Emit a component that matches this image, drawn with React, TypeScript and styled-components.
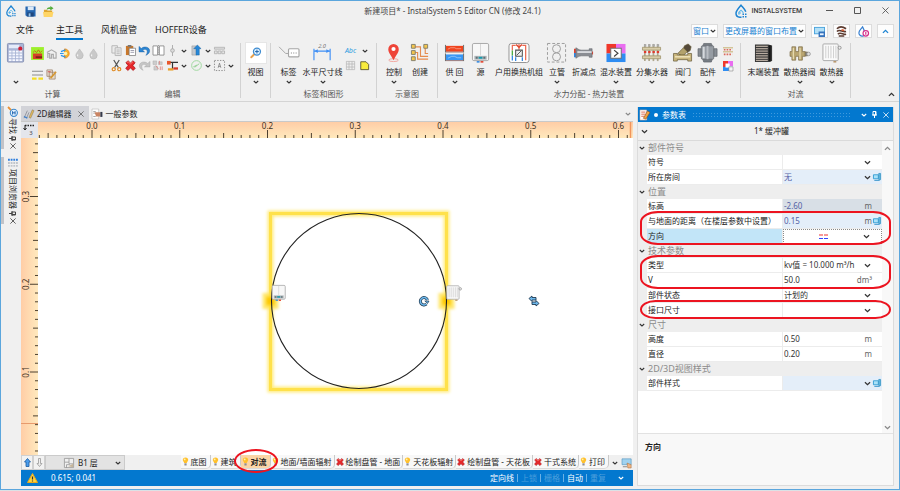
import React, { useEffect, useRef, useState } from "react";
import styled, { createGlobalStyle, css } from "styled-components";

const BLUE = "#0378cf";
const RED = "#ec1420";

const GlobalStyle = createGlobalStyle`
  * { box-sizing: border-box; }
  body {
    margin: 0;
    background: #dbe2e6;
    color: #222;
    font: 8px/12px "Noto Sans", "Noto Sans CJK SC", sans-serif;
  }
  button, input, select { font: inherit; color: inherit; margin: 0; }
`;

/* ---------- window frame ---------- */

const Window = styled.div`
  display: flex;
  flex-direction: column;
  height: calc(100vh - 1px);
  min-height: 440px;
  background: #f0f0f0;
  border: 1px solid #5ba6dd;
`;

const TitleBar = styled.header`
  display: grid;
  grid-template-columns: 1fr auto 1fr;
  align-items: center;
  height: 20px;
  padding-left: 5px;
`;

const QuickAccess = styled.div`
  display: flex;
  align-items: center;
  gap: 7px;
  > :first-child { margin-right: 2px; }
`;

const Title = styled.h1`
  margin: 0;
  font-size: 8px;
  font-weight: 400;
  color: #444;
`;

const TitleRight = styled.div`
  display: flex;
  align-items: center;
  justify-content: flex-end;
`;

const Brand = styled.div`
  display: flex;
  align-items: center;
  gap: 4px;
  margin-right: 13px;
  font: 500 7px/12px Roboto, sans-serif;
  color: #3c3c3c;
`;

const PlainButton = styled.button<{ $w?: number; $h?: number }>`
  display: flex;
  align-items: center;
  justify-content: center;
  width: ${(p) => (p.$w ? p.$w + "px" : "auto")};
  height: ${(p) => (p.$h ? p.$h + "px" : "auto")};
  padding: 0;
  border: 0;
  background: none;
`;

const Glyph = styled.svg`
  display: block;
  flex: none;
  overflow: visible;
`;

/* ---------- menu row ---------- */

const MenuRow = styled.nav`
  display: flex;
  align-items: center;
  height: 20px;
  padding: 0 5px 0 15px;
`;

const MenuTab = styled.button<{ $active?: boolean }>`
  height: 18px;
  margin-right: 18px;
  padding: 0;
  border: 0;
  border-bottom: 2px solid ${(p) => (p.$active ? BLUE : "transparent")};
  background: none;
  font-size: 9px;
  line-height: 16px;
  &:first-child { margin-right: 22px; }
`;

const MenuTools = styled.div`
  display: flex;
  gap: 5px;
  margin-left: auto;
`;

const ToolButton = styled.button`
  display: flex;
  align-items: center;
  justify-content: center;
  gap: 1px;
  min-width: 17px;
  height: 14px;
  padding: 0 1px;
  border: 1px solid #dcdcdc;
  background: #fdfdfd;
  color: #1c83d2;
  white-space: nowrap;
`;

/* ---------- ribbon ---------- */

const Ribbon = styled.section`
  display: flex;
  height: 61px;
  flex: none;
  padding: 2px 0 3px;
  border-bottom: 1px solid #d4d4d4;
`;

const Group = styled.div<{ $w: number }>`
  display: flex;
  flex-direction: column;
  width: ${(p) => p.$w}px;
  border-right: 1px solid #d2d2d2;
`;

const GroupBody = styled.div`
  display: flex;
  justify-content: center;
  flex: 1;
`;

const GroupCaption = styled.div`
  height: 12px;
  margin-bottom: -2px;
  text-align: center;
  color: #555;
`;

const BigButtonBox = styled.button<{ $w: number }>`
  display: flex;
  flex-direction: column;
  align-items: center;
  width: ${(p) => p.$w}px;
  padding: 0;
  border: 0;
  background: none;
  white-space: nowrap;
  > span { line-height: 13px; margin: 2px 0 1px; }
`;

const ViewFrame = styled.i`
  display: block;
  background: #fff;
  outline: 1px solid #e6e6e6;
`;

const IconGrid = styled.div<{ $cols: string; $row: number }>`
  display: grid;
  grid-template-columns: ${(p) => p.$cols};
  grid-auto-rows: ${(p) => p.$row}px;
  align-content: start;
  align-items: center;
  justify-items: center;
`;

const RibbonEnd = styled.div`
  display: flex;
  flex: 1;
  align-items: flex-end;
  justify-content: flex-end;
  padding-right: 4px;
`;

/* ---------- work area ---------- */

const Work = styled.main`
  display: flex;
  flex: 1;
  min-height: 0;
  padding: 4px 5px 3px 0;
`;

const Dock = styled.aside`
  display: flex;
  flex-direction: column;
  gap: 8px;
  width: 20px;
  flex: none;
`;

const DockTab = styled.div`
  display: flex;
  flex-direction: column;
  align-items: center;
  gap: 1px;
  padding: 1px 0 0;
  border-left: 3px solid #c2c3c8;
`;

const DockLabel = styled.span`
  writing-mode: vertical-rl;
  text-orientation: sideways;
  line-height: 12px;
`;

const Editor = styled.div`
  display: flex;
  flex-direction: column;
  flex: 1;
  min-width: 0;
`;

const DocTabs = styled.div`
  display: flex;
  align-items: stretch;
  height: 15px;
  flex: none;
`;

const DocTab = styled.div<{ $active?: boolean }>`
  display: flex;
  align-items: center;
  gap: 3px;
  padding: 0 2px 0 3px;
  background: ${(p) => (p.$active ? "#d2d3d8" : "transparent")};
`;

const DocTabsMore = styled.div`
  display: flex;
  align-items: center;
  margin-left: auto;
`;

const Sheet = styled.div`
  display: grid;
  grid-template: 16px 1fr / 17px 1fr;
  flex: 1;
  min-height: 0;
  border-top: 1px solid #c9c9c9;
`;

const Corner = styled.div`
  display: flex;
  align-items: center;
  justify-content: center;
  background: #e4e6ec;
`;

const RulerTop = styled.svg`
  display: block;
  width: 100%;
  height: 16px;
  overflow: visible;
  background: linear-gradient(#ffcda6, #ffe9bd);
`;

const RulerSide = styled.svg`
  display: block;
  width: 17px;
  height: 100%;
  overflow: visible;
  background: linear-gradient(90deg, #ffcda6, #ffe9bd);
`;

const Canvas = styled.svg`
  display: block;
  width: 100%;
  height: 100%;
  background: #fff;
`;

const LayerBar = styled.div`
  display: flex;
  align-items: stretch;
  height: 15px;
  flex: none;
`;

const LevelButton = styled.button`
  display: flex;
  align-items: center;
  justify-content: center;
  width: 12px;
  padding: 0;
  border: 1px solid #d0d0d0;
  background: #f2f2f2;
`;

const LevelPicker = styled.label`
  display: flex;
  align-items: center;
  gap: 3px;
  width: 80px;
  padding: 0 3px 0 18px;
  border: 1px solid #cbcbcb;
  background: #e3e3e3;
`;

const Layers = styled.div`
  display: flex;
  margin-left: auto;
`;

const LayerTab = styled.button<{ $active?: boolean }>`
  position: relative;
  display: flex;
  align-items: center;
  gap: 2px;
  min-width: 30px;
  height: 14px;
  padding: 0 2px 0 1px;
  border: 0;
  border-right: 1px solid #c9c9c9;
  border-bottom: 1px solid #d9d9d9;
  border-radius: 0 0 5px 0;
  background: ${(p) => (p.$active ? "#fbd5a6" : "#f8f8f8")};
  font-weight: ${(p) => (p.$active ? 700 : 400)};
  white-space: nowrap;
`;

const LayerMark = styled.span`
  position: absolute;
  inset: -6px -8px -5px -7px;
  z-index: 2;
  border: 2px solid ${RED};
  border-radius: 50%;
  pointer-events: none;
`;

const LayerTools = styled.div`
  display: flex;
  align-items: center;
  gap: 4px;
  padding: 0 1px 0 3px;
`;

const StatusBar = styled.footer`
  display: flex;
  align-items: center;
  height: 16px;
  flex: none;
  padding: 0 9px 0 6px;
  background: ${BLUE};
  color: #fff;
`;

const StatusCoords = styled.span`
  margin-left: 13px;
`;

const StatusModes = styled.div`
  display: flex;
  align-items: center;
  margin-left: auto;
  margin-right: 9px;
`;

const Mode = styled.button<{ $on?: boolean }>`
  padding: 0 3px;
  border: 0;
  border-left: 1px solid #6bb1e6;
  background: none;
  line-height: 8px;
  color: ${(p) => (p.$on ? "#fff" : "#4c9fdc")};
  &:first-child { border-left: 0; }
`;

/* ---------- properties panel ---------- */

const Panel = styled.section`
  display: flex;
  flex-direction: column;
  width: 28%;
  min-width: 257px;
  max-width: 340px;
  margin: 1px 0 0 4px;
  border: 1px solid #dcdcdc;
  border-top: 0;
  background: #fff;
`;

const PanelHeader = styled.header`
  display: flex;
  align-items: center;
  gap: 4px;
  height: 15px;
  flex: none;
  padding: 0 4px 0 2px;
  background: ${BLUE};
  color: #fff;
`;

const Dot = styled.span`
  width: 4px;
  height: 4px;
  border-radius: 50%;
  background: #fff;
`;

const Grip = styled.span`
  flex: 1;
  height: 5px;
  margin: 0 4px 0 2px;
  background: radial-gradient(circle, #3f9ade 0 0.5px, transparent 1px) 0 0 / 3px 3px;
`;

const Caption = styled.div`
  display: grid;
  grid-template-columns: 12px 1fr;
  align-items: center;
  height: 19px;
  flex: none;
  border-bottom: 1px solid #dadada;
  background: #f0f0f0;
  text-align: center;
`;

const PropArea = styled.div`
  display: flex;
  flex: 1;
  min-height: 0;
`;

const PropList = styled.div`
  flex: 1;
  min-width: 0;
`;

const SectionHead = styled.button`
  display: flex;
  align-items: center;
  gap: 3px;
  width: 100%;
  height: 14px;
  padding: 0 1px;
  border: 0;
  background: #eeeeee;
  color: #8b8b8b;
  font-size: 9px;
  line-height: 14px;
`;

const Row = styled.div<{ $tone?: "focus" }>`
  display: grid;
  grid-template-columns: 9px 136fr 99fr;
  height: 15px;
  background: #eeeeee;
  > label {
    padding-left: 1px;
    border-right: 1px solid #ececec;
    border-bottom: 1px solid #ececec;
    background: ${(p) => (p.$tone ? "#c2e5f8" : "#fff")};
    line-height: 14px;
    white-space: nowrap;
  }
`;

type Tone = "plain" | "auto" | "locked" | "focus";
const tones: Record<Tone, string> = {
  plain: "#ffffff",
  auto: "#e4eef9",
  locked: "#d8dfe6",
  focus: "#ffffff",
};

const Field = styled.div<{ $tone: Tone }>`
  display: flex;
  align-items: center;
  min-width: 0;
  border-bottom: 1px solid #ececec;
  background: ${(p) => tones[p.$tone]};
  color: ${(p) => (p.$tone === "auto" || p.$tone === "locked" ? "#5562a5" : "#333")};
  ${(p) => p.$tone === "focus" && css`border: 1px dotted #8a8a8a;`}
`;

const controlStyle = css`
  flex: 1;
  min-width: 0;
  height: 12px;
  padding: 0 0 0 1px;
  border: 0;
  outline: 0;
  background: none;
  line-height: 12px;
`;

const TextBox = styled.input`${controlStyle}`;

const DropDown = styled.select`
  ${controlStyle}
  appearance: none;
`;

const SideSlot = styled.span<{ $unit?: boolean }>`
  display: flex;
  justify-content: ${(p) => (p.$unit ? "flex-end" : "center")};
  min-width: 9px;
  color: #666;
`;

const AutoSlot = styled.span`
  width: 10px;
  padding-left: 1px;
`;

const Preview = styled.span`
  flex: 1;
  display: flex;
  justify-content: center;
`;

const HiddenSelect = styled.select`
  position: absolute;
  inset: 0;
  width: 100%;
  opacity: 0;
`;

const PreviewField = styled.span`
  position: relative;
  display: flex;
  align-items: center;
  flex: 1;
`;

const Marked = styled.div`
  position: relative;
  &::after {
    content: "";
    position: absolute;
    inset: -3px -9px -1px 2px;
    z-index: 2;
    border: 2px solid ${RED};
    border-radius: 18px / 11px;
    pointer-events: none;
  }
`;

const ScrollTrack = styled.div`
  display: flex;
  flex-direction: column;
  align-items: center;
  justify-content: space-between;
  width: 11px;
  flex: none;
  padding: 4px 0 2px;
  background: #f8f8f8;
`;

const Help = styled.div`
  height: 52px;
  flex: none;
  padding: 7px;
  border-top: 1px solid #e2e2e2;
  background: #f8f8f8;
  font-weight: 700;
`;

/* ---------- icons ---------- */

const Chevron = ({ up, color = "#333", size = 6 }: { up?: boolean; color?: string; size?: number }) => (
  <Glyph width={size} height={size} viewBox="0 0 6 6" fill="none" stroke={color} strokeWidth="1.1">
    <path d={up ? "M.8 4.2 3 2l2.2 2.2" : "M.8 2 3 4l2.200-2"} />
  </Glyph>
);

const Cross = ({ size = 7, color = "#555" }: { size?: number; color?: string }) => (
  <Glyph width={size} height={size} viewBox="0 0 8 8" fill="none" stroke={color} strokeWidth="1">
    <path d="M.5.5l7 7M7.5.5l-7 7" />
  </Glyph>
);

const Pin = ({ side, color = "#444" }: { side?: boolean; color?: string }) => (
  <Glyph width="7" height="7" viewBox="0 0 7 7" fill="none" stroke={color} strokeWidth="1">
    <g transform={side ? "rotate(90 3.5 3.5)" : undefined}>
      <path d="M2 .5h3v3.5H2zM1 4h5M3.5 4v3M4.5.5V4" />
    </g>
  </Glyph>
);

const Drop = ({ size }: { size: number }) => (
  <Glyph width={size} height={size * 1.2} viewBox="0 0 12 14" fill="none" strokeWidth="1.5">
    <path d="M6.5 13H4.8A4 4 0 0 1 1 9C1 6.500 3.500 4 6 1c2.200 2.600 4.200 4.500 4.800 6.500" stroke="#1c83d2" />
    <path d="M4 10.500V8l2-2 2 2v1M3 8.800h3" stroke="#59b4e8" strokeWidth="1.100" />
    <path d="M7.500 10h1.500M10 10h1.500M7.500 12.500h1.500M10 12.500h1.500" stroke="#1c83d2" strokeWidth="1.500" />
  </Glyph>
);

const Small = ({ children, s = 11 }: { children: React.ReactNode; s?: number }) => (
  <Glyph width={s} height={s} viewBox="0 0 12 12">{children}</Glyph>
);

const Save = () => (
  <Small>
    <path d="M.5.5h11v11H2l-1.500-1.500z" fill="#2566b0" />
    <path d="M3 .5h6.500v4H3z" fill="#dbe9f7" /><path d="M2.500 7h7v4.500h-7z" fill="#20477c" />
    <path d="M4 8h2v3.500H4z" fill="#8fc4f0" />
  </Small>
);
const OpenFolder = () => (
  <Small>
    <path d="M1 4h3l1 1h5v7H1z" fill="#dda52e" /><path d="M0 6.500h11.500L10 12H1z" fill="#ffd565" />
    <path d="M4 4c.5-2.500 2.500-3 4-2.500V0l3.500 2.500L8 5V3.500C6.500 3 5.500 3 4 4z" fill="#53ad3b" />
  </Small>
);

const Bulb = () => (
  <Glyph width="7" height="9" viewBox="0 0 7 9">
    <path d="M3.500.5C1.800.5.700 1.600.8 3c.1 1.200 1.200 1.800 1.400 3h2.600C5 4.800 6.100 4.200 6.200 3 6.300 1.600 5.200.5 3.500.5z" fill="#ffc02c" />
    <circle cx="2.700" cy="2.400" r=".9" fill="#fff2b0" /><path d="M2.400 6.300h2.200v2.200H2.400z" fill="#8e8e95" />
  </Glyph>
);
const RedX = ({ size = 8 }: { size?: number }) => (
  <Glyph width={size} height={size} viewBox="0 0 12 12">
    <path d="M1 3 3.200.8 6 3.200 8.800.8 11 3 8.600 6l2.600 3L9 11.400 6 8.800 3 11.400.8 9l2.600-3z" fill="#e6282b" stroke="#a91318" strokeWidth=".8" />
    <path d="M2.200 2.800 3.300 1.800 6 4.200l2.700-2.400" fill="none" stroke="#ff8a80" strokeWidth=".9" />
  </Glyph>
);
const Monitor = () => (
  <Glyph width="8" height="8" viewBox="0 0 9 9">
    <path d="M.5 2h5.500v4.500H.5z" fill="#a9e1f8" stroke="#2d9bd2" /><path d="M6.500 .5h2v7h-2z" fill="#69b9e2" stroke="#2d8fc0" strokeWidth=".8" />
    <path d="M1.500 8.300h6" stroke="#2d8fc9" />
  </Glyph>
);
const Boiler = () => (
  <g>
    <rect x="1.500" y=".5" width="17" height="18" rx="1.500" fill="#f7f7f7" stroke="#a5a5a5" />
    <path d="M10 1v12" stroke="#ccc" strokeWidth=".8" /><path d="M3.500 13.500h13v4h-13z" fill="#b2b8bb" />
    <path d="M5 14.500h2v2H5zM13 14.500h2v2h-2z" fill="#607178" /><path d="M8 14.500h4v2H8z" fill="#159bae" />
    <path d="M6 19.800h3" stroke="#2f86e0" strokeWidth="1.600" /><path d="M10 19.800h3" stroke="#e23b24" strokeWidth="1.600" />
  </g>
);
const Radiator = () => (
  <g>
    <rect x="1" y="1" width="16" height="17.500" rx="1" fill="#fafafa" stroke="#a8a8a8" />
    <path d="M4 3v13M6.700 3v13M9.400 3v13M12.100 3v13M14.600 3v13" stroke="#c9c9c9" strokeWidth=".9" />
    <circle cx="18.500" cy="5" r="1.600" fill="#eee" stroke="#8b8b8b" strokeWidth=".9" />
    <path d="M12 19h3v1.500h-3z" fill="#b38f60" />
  </g>
);

const bigIcons: Record<string, React.ReactNode> = {
  calc: (
    <g>
      <rect x="1.500" y=".5" width="17" height="19.500" rx="1" fill="#a9b5d6" stroke="#8792b3" />
      <path d="M3 2h11v3.500H3z" fill="#e5ebfa" /><circle cx="15" cy="6" r="2.200" fill="#cf2038" />
      {[8, 11, 14, 17].map((y) => [3, 6.700, 10.400, 14.100].map((x) => <rect key={x + "-" + y} x={x} y={y} width="2.800" height="2" fill="#f5f7ff" />))}
    </g>
  ),
  view: (
    <g>
      <path d="M9 11.500l-3.500 3.500" stroke="#e9a04b" strokeWidth="2" strokeLinecap="round" />
      <circle cx="11.500" cy="9" r="3.700" fill="#dff2ff" stroke="#3e8bd0" strokeWidth="1.300" />
      <path d="M11.500 7v4M9.500 9h4" stroke="#1b5fa8" />
    </g>
  ),
  label: (
    <g fill="none" stroke="#a5a5a5">
      <path d="M0 4l7 7h3" /><rect x="10" y="6" width="11" height="8.500" rx="1" fill="#fff" strokeWidth="1.200" />
      <path d="M12.500 10.500h6" strokeDasharray="1 1.500" stroke="#777" />
    </g>
  ),
  dim: (
    <g>
      <path d="M1 6v12M18 6v12M1 8.500h17" stroke="#3f8ff5" fill="none" strokeWidth="1.200" />
      <path d="M1.500 8.500 5 6.500v4zM17.500 8.500 14 6.500v4z" fill="#3f8ff5" />
      <text x="9.500" y="5" textAnchor="middle" fontSize="6" fontStyle="italic" fill="#777">2.0</text>
    </g>
  ),
  pin: (
    <g>
      <ellipse cx="10" cy="18" rx="5" ry="1.500" fill="none" stroke="#f2a49d" />
      <path d="M10 18C8 13.500 4.500 10.500 4.500 6.500a5.500 5.500 0 0 1 11 0C15.500 10.500 12 13.500 10 18z" fill="#ee4438" />
      <circle cx="10" cy="6.300" r="2.200" fill="#fff" />
    </g>
  ),
  create: (
    <g fill="none">
      <path d="M3 4h8v10h8M3 10h5v7h11M16 4v7h3" stroke="#e58b4e" strokeWidth="1.200" />
      <g fill="#f4c64c" stroke="#84806c"><path d="M1.500 1.500h4v4h-4zM1.500 8h4v4h-4zM1.500 14.500h4v4h-4zM14.500 1.500h4v4h-4z" /></g>
    </g>
  ),
  supply: (
    <g>
      <path d="M1 3h18v6H1z" fill="#f0441d" /><path d="M1 12h18v6H1z" fill="#3796f4" />
      <path d="M3 6.500l3-1.500h4l2 1h5M3 16l4-2h3l3 1.500h4" stroke="#fff" strokeWidth=".6" fill="none" opacity=".7" />
      <path d="M.5 2v8M19.500 2v8M.5 11v8M19.500 11v8" stroke="#666" />
      <path d="M1 9.500h18M1 18.500h18" stroke="#6c2a20" strokeWidth=".6" />
    </g>
  ),
  boiler: <Boiler />,
  station: (
    <g fill="none">
      <rect x="0" y=".5" width="21" height="20" rx="2.500" fill="#fff" stroke="#909090" />
      <path d="M7 2.500H3.500V8M14 2.500h3.500V18M10.500 1v6" stroke="#ea6a52" strokeWidth="1.300" />
      <path d="M3.500 13v5.500M7 19v-4M14 19v-4" stroke="#2f83e0" strokeWidth="1.300" />
      <path d="M3.500 8v5" stroke="#4fae45" strokeWidth="1.400" /><path d="M7.500 1.500l3 3 3-3" stroke="#e0452d" strokeWidth="1.500" />
      <path d="M7 7.500h7V14H7z" fill="#f0f0f0" stroke="#555" strokeWidth="1.100" /><path d="M8 13l5-5" stroke="#555" />
    </g>
  ),
  riser: (
    <g fill="none" stroke="#9b9b9b">
      <rect x=".5" y=".5" width="19" height="19.500" strokeDasharray="3 2" /><circle cx="10" cy="6" r="4.200" /><circle cx="10" cy="14.500" r="4.200" />
    </g>
  ),
  reducer: (
    <g>
      <path d="M0 6h2v4.500H0z" fill="#e23d2b" /><path d="M0 10.500h2V15H0z" fill="#2f83e0" />
      <path d="M2 5c2 1 3 2.500 6 2.500h8V6h3v9h-3v-1.500H8c-3 0-4 1.500-6 2.500z" fill="#8a8d93" stroke="#5f6268" strokeWidth=".6" />
      <path d="M3.500 9.500h15" stroke="#dfe1e5" strokeWidth="1.800" /><path d="M19.500 9v3" stroke="#c23c2c" />
    </g>
  ),
  mixer: (
    <g>
      <path d="M.5 1h10v10H.5z" fill="#f0372a" /><path d="M10.500 1h10v10h-10z" fill="#e96df0" /><path d="M.5 11h20v9H.5z" fill="#2f8df2" />
      <rect x="5" y="5.500" width="11" height="10.500" fill="#fff" stroke="#6c6c6c" /><path d="M8.500 7.500l4 3.300-4 3.300" stroke="#444" strokeWidth="1.300" fill="none" />
    </g>
  ),
  manifold: (
    <g>
      {[3, 7.500, 12, 16.500].map((x) => (
        <g key={x}><path d={`M${x} 1v18`} stroke="#b0a88e" strokeWidth="1.800" /><path d={`M${x - 1} 2.500h2.500`} stroke="#aaa" strokeWidth="2.500" /><path d={`M${x - 1} 9.500h2.500`} stroke="#df3b2d" strokeWidth="2.200" /></g>
      ))}
      <path d="M.5 4.500h19v3H.5zM.5 13.500h19v3H.5z" fill="#d8cca8" stroke="#9c9069" strokeWidth=".8" />
    </g>
  ),
  valve: (
    <g stroke="#5f5330" strokeWidth=".7">
      <path d="M12 3l4-2 3 3-1 4-3 2-4-4z" fill="#54493a" /><path d="M5 11l6-6 4 4-5 5z" fill="#b3a26c" />
      <path d="M.5 11h4v1.500h11V11h4v8h-4v-1.500h-11V19h-4z" fill="#c8b57c" />
      <path d="M2 14.500h16" stroke="#f0e5bd" strokeWidth="1.500" />
    </g>
  ),
  fitting: (
    <g stroke="#5d6268" strokeWidth=".7">
      <path d="M0 6h3.500v8H0zM16.500 6H20v8h-3.500z" fill="#888d94" /><path d="M6 .5h8l1 2.500H5zM5 17h10l-1 3H6z" fill="#767c83" />
      <rect x="3.500" y="3" width="13" height="14" rx="1" fill="#969ca3" /><path d="M6 4v12" stroke="#d5d9dd" strokeWidth="2" /><path d="M10 3v14" stroke="#b9bec4" strokeWidth="2" />
    </g>
  ),
  unit: (
    <g>
      <path d="M1 1.500h14l4 1v16.500l-4 1H1z" fill="#373737" />
      {[3.500, 6, 8.500, 11, 13.500, 16, 18.300].map((y) => <path key={y} d={`M2 ${y}h12.500`} stroke="#b8aca1" strokeWidth="1.300" />)}
      <path d="M16.500 2.500v17" stroke="#171717" strokeWidth="2" />
    </g>
  ),
  radValve: (
    <g stroke="#776741" strokeWidth=".7">
      <path d="M2 4h4v5h3V4h4v5h3v5h-3v4H9v-4H6v4H2v-4H0V9h2z" fill="#b9a570" /><path d="M3.500 5v12M10.500 5v12" stroke="#eadfb5" strokeWidth="1.200" />
      <path d="M16 9.500h2.500v4H16z" fill="#888" /><circle cx="19.500" cy="11.500" r="1.900" fill="#ddd" stroke="#888" />
    </g>
  ),
  radiator: <Radiator />,
};

const smallIcons: Record<string, React.ReactNode> = {
  heat: <g><path d="M-1-1h14v14H-1z" fill="#9df02c" /><path d="M1 6h10v6H1z" fill="#d6402a" /><path d="M1 5l2-2 2 2 2-3 2 3 2-2" stroke="#c26a15" fill="none" /><path d="M4 9h7v2H4z" fill="#7c2417" /></g>,
  house: <g stroke="#aaa" fill="none" strokeWidth="1.300"><path d="M1 5l5-3 5 3v6H8V7H6v4H4V6H2v5" /></g>,
  season: <g><path d="M5 1a5 5 0 0 1 0 10z" fill="#f5b52c" stroke="#f08a1b" /><path d="M6 2 1 4M6 6H0M6 10 1 8" stroke="#2f95e8" strokeWidth="1.300" /><circle cx="6" cy="6" r="2" fill="#fff1ad" /></g>,
  drop: <g><path d="M6 1c2 3.500 4 4.500 4 7a4 4 0 0 1-8 0c0-2.500 2-3.500 4-7z" fill="#c9c9c9" stroke="#b0b0b0" strokeWidth=".6" /><path d="M4 7v2" stroke="#fff" /></g>,
  pipes: <g><path d="M0 2.500h12M0 6.500h12" stroke="#8b8b8b" strokeWidth="1.200" /><path d="M0 10.500h5M7 10.500h5" stroke="#f4dd26" strokeWidth="2.500" /></g>,
  notes: <g><path d="M1 1h6v7H1zM3.500 3.500H10V11H3.500z" fill="#e8ded0" stroke="#9a7d62" strokeWidth=".8" /><path d="M5 10l6-7" stroke="#d69730" strokeWidth="1.800" /><path d="M2 3h3" stroke="#c44" /></g>,
  copy: <g fill="#ececec" stroke="#b5b5b5"><path d="M1 .8h6v8H1z" /><path d="M4.500 3h6.500v8.500H4.500z" /><path d="M6 5.500h3.500M6 7.500h3.500M6 9.500h3.500" /></g>,
  paste: <g><path d="M1 1h8v10H1z" fill="#c9772a" /><path d="M3 0h4v2H3z" fill="#777" /><path d="M4.500 3.500h7v8h-7z" fill="#fff" stroke="#777" strokeWidth=".8" /><path d="M6 6h4M6 8h4" stroke="#99a" /></g>,
  undo: <path d="M0 1.500v6h6L4 5.800c2.500-2 5-1 5 1.500 0 1.500-.5 2.500-1.500 4C10.500 10 12 8 11.500 5.500 11 2.500 6 .8 2.500 3.800z" fill="#2b86d4" stroke="#175a9c" strokeWidth=".5" />,
  redo: <path d="M12 1.500v6H6l2-1.700c-2.500-2-5-1-5 1.500 0 1.500.5 2.500 1.500 4C1.500 10 0 8 .5 5.500 1 2.500 6 .8 9.500 3.800z" fill="#c6c6c6" stroke="#a5a5a5" strokeWidth=".5" />,
  mirror: <g fill="#fff" stroke="#777" strokeWidth=".8"><path d="M0 1h5v10H0zM7 1h5v10H7z" /><path d="M6 0v12" strokeDasharray="1 1" /></g>,
  node: <g stroke="#aaa" fill="#ddd"><path d="M6 0v12" /><circle cx="6" cy="6" r="2" /></g>,
  up: <g><path d="M1 1h5v10H1z" fill="#c5c9ce" stroke="#999" strokeWidth=".6" /><path d="M7 0l4 4H9v7H5.500V4H3z" fill="#2687d8" stroke="#16619f" strokeWidth=".5" /></g>,
  table: <g fill="#e4e4e4" stroke="#b5b5b5"><path d="M.5 2.500h11v2H.5zM.5 6.500h3v3h-3zM4.500 6.500h3v3h-3zM8.500 6.500h3v3h-3z" /></g>,
  cut: <g fill="none"><path d="M3 0l5 8M9 0L4 8" stroke="#555" strokeWidth="1.300" /><circle cx="3" cy="10" r="1.700" stroke="#df8a22" strokeWidth="1.300" /><circle cx="9" cy="10" r="1.700" stroke="#df8a22" strokeWidth="1.300" /></g>,
  swap: <g><path d="M0 1h4v4H0zM6 2h4v3H6zM1 7h4v4H1z" fill="#cdcdcd" stroke="#aaa" strokeWidth=".5" /><path d="M7 1v4M3 6l3 4M8 7v4M10 7v4" stroke="#e08a85" /></g>,
  connect: <g><path d="M1 2.500h11M6 3v7" stroke="#333" strokeWidth="1.300" /><path d="M0 1h4v4H0z" fill="#e9572b" /><path d="M1 9h6v2.500H1z" fill="#e9a12b" /><path d="M7 8h5v2.500H7z" fill="#d6392a" /></g>,
  circle: <g><circle cx="6" cy="6" r="5.300" fill="none" stroke="#9ad69a" /><path d="M2.500 7.500l4-2M4 8l5-4" stroke="#8fd08f" fill="none" /></g>,
  frame: <g><path d="M.5.5h11v11H.5z" fill="none" stroke="#888" strokeDasharray="1.500 1.500" /><path d="M4.500 8.500l1.500-5 1.500 5M5 7h2" stroke="#777" strokeWidth=".8" fill="none" /></g>,
  grid: <path d="M.5.5h11v11H.5zM.5 4h11M.5 8h11M4 .5v11M8 .5v11" fill="#eee" stroke="#b5b5b5" />,
  note: <path d="M1 1h7l3.500 3.500V11.500H1z" fill="#f8ec3c" stroke="#4d4a2a" strokeWidth="1.100" />,
  mini: <g><path d="M0 2h12M0 7h12" stroke="#d3c499" strokeWidth="1.800" /><path d="M1 4.500h10M1 10h10" stroke="#dc6a5c" strokeWidth="2" strokeDasharray="2 1.300" /></g>,
  mix2: <g><path d="M0 0h6v8H0z" fill="#f0372a" /><path d="M6 0h6v6H6z" fill="#e96df0" /><path d="M0 7h12v5H0z" fill="#2f8df2" /><path d="M3 3h5v5H3z" fill="#fff" /><path d="M7 7h5v5H7z" fill="#f4f4f4" stroke="#777" strokeWidth=".6" /></g>,
  layout: <g><path d="M0 1h12v8H0z" fill="#4ba3dc" /><path d="M1 2h10v6H1z" fill="#b3e0f7" /><path d="M5 6h7v6H5z" fill="#3673bd" /><path d="M6.500 8h4v2h-4z" fill="#e8f3ff" /></g>,
  books: <g fill="none" stroke="#5b3b30" strokeWidth="1.700"><path d="M1 3c3-3 7-2 10 0M1 6c3-3 6 1 10 0M2 9c3-3 6 1 9 0M3 11h6" /><path d="M6 4l3 1" stroke="#d65a2f" /></g>,
  drops: <g fill="none" strokeWidth="1.300"><path d="M5 1C3 4 1 5 1 7.500A3.500 3.500 0 0 0 5 11C8 11 8 6 5 1z" stroke="#367fd0" /><circle cx="8.500" cy="8" r="3" fill="#fff" stroke="#d62e8a" /><path d="M8.500 6.500v3" stroke="#d62e8a" /></g>,
  pencil: <g><path d="M0 11 4 2M3 11l3-7" stroke="#898d95" /><path d="M6 10l4-9 2 1-4 9z" fill="#e1b85d" stroke="#73664a" strokeWidth=".5" /><path d="M0 9l4 2" stroke="#3c7fcd" strokeWidth="1.500" /></g>,
  hand: <g><path d="M0 0h8v12H0z" fill="#fff" stroke="#bbb" strokeWidth=".8" /><path d="M1.500 3h3M1.500 5h2M1.500 9h3" stroke="#999" /><path d="M3 4h7v5H5z" fill="#c98463" /><path d="M10 3.500h2.500v6H10z" fill="#353b4c" /></g>,
  find: <g><path d="M0 0l4 4" stroke="#e89136" strokeWidth="2.200" /><circle cx="7" cy="7" r="4.300" fill="#e2f1fe" stroke="#3b88cd" strokeWidth="1.300" /><path d="M5.500 5v4M8.500 5v4M5.500 7h3" stroke="#2468b0" strokeWidth="1.200" /></g>,
  list: <g><path d="M0 2h12" stroke="#2f7fdd" strokeWidth="2.500" strokeDasharray="2.200 1" /><path d="M0 6h12M0 9.500h12" stroke="#c0c5cb" strokeWidth="2.200" strokeDasharray="2.200 1" /></g>,
  form: <g><path d="M0 0h8v12H0z" fill="#fff" stroke="#d9b3a2" strokeWidth=".7" /><path d="M1.500 2.500h5M1.500 5h5M1.500 7.500h4" stroke="#d6502e" /><path d="M4 10l5-9 3 2-5 8z" fill="#eda242" stroke="#7a3d1b" strokeWidth=".6" /></g>,
  plan: <g><path d="M.5.5h11v11H.5z" fill="#f0f0f0" stroke="#999" /><path d="M1 5h5V1M6 5v2h5M3 12V8h4" fill="none" stroke="#999" /><path d="M5 10l6-3v4z" fill="#c5b59a" /></g>,
  screen: <g><path d="M0 1h11v7H0z" fill="#9fd2f0" stroke="#5a98c0" strokeWidth=".8" /><path d="M6 6l5 2v4H7z" fill="#f0b584" stroke="#a36b3b" strokeWidth=".6" /><path d="M1 10.500h5" stroke="#777" /></g>,
};

const Big = ({ name }: { name: string }) => (
  <Glyph width="20" height="20" viewBox="0 0 21 21">{bigIcons[name]}</Glyph>
);
const Mini = ({ name, s = 11, label }: { name: string; s?: number; label?: string }) =>
  label ? (
    <PlainButton aria-label={label}><Small s={s}>{smallIcons[name]}</Small></PlainButton>
  ) : (
    <Small s={s}>{smallIcons[name]}</Small>
  );

type BigProps = { icon: string; label: string; w: number; menu?: boolean };
const BigButton = ({ icon, label, w, menu }: BigProps) => (
  <BigButtonBox $w={w}>
    {icon === "view" ? <ViewFrame><Big name={icon} /></ViewFrame> : <Big name={icon} />}
    <span>{label}</span>
    {menu && <Chevron />}
  </BigButtonBox>
);

const AbcGlyph = styled.span`
  font-size: 7px;
  font-style: italic;
  color: #2c9be0;
`;

const CalcButton = styled.button`
  display: flex;
  flex-direction: column;
  align-items: center;
  justify-content: space-between;
  width: 22px;
  height: 42px;
  padding: 0;
  margin-right: 3px;
  border: 0;
  background: none;
`;

/* ---------- rulers and drawing ---------- */

const STEP = 87.75;
const ORIGIN_X = 54;
const ORIGIN_Y = 58.5;
const tickLength = (i: number) => (i % 10 === 0 ? 8 : i % 5 === 0 ? 5 : 3);

function useSize<T extends Element>() {
  const ref = useRef<T>(null);
  const [size, setSize] = useState({ width: 0, height: 0 });
  useEffect(() => {
    const node = ref.current;
    if (!node) return;
    const measure = () => {
      const box = node.getBoundingClientRect();
      setSize({ width: box.width, height: box.height });
    };
    measure();
    const observer = new ResizeObserver(measure);
    observer.observe(node);
    return () => observer.disconnect();
  }, []);
  return { ref, ...size };
}

const ticksWithin = (origin: number, length: number) =>
  Array.from({ length: 400 }, (_, n) => n - 6)
    .map((i) => ({ i, at: origin + (i * STEP) / 10 }))
    .filter(({ at }) => at > 0 && at < length);

const HorizontalRuler = () => {
  const { ref, width } = useSize<SVGSVGElement>();
  const ticks = ticksWithin(ORIGIN_X, width);
  return (
    <RulerTop ref={ref}>
      {ticks.map(({ i, at }) => <path key={i} d={`M${at} ${16 - tickLength(i)}V16`} stroke="#4c4030" />)}
      {ticks.filter(({ i, at }) => i % 10 === 0 && at < width - 8).map(({ i, at }) => (
        <text key={i} x={at} y="7" textAnchor="middle" fontSize="8" fill="#3c3024">{(i / 100).toFixed(1)}</text>
      ))}
      <path d="M592.500 0v16" stroke="#f1955c" strokeWidth="1.500" />
    </RulerTop>
  );
};

const VerticalRuler = () => {
  const { ref, height } = useSize<SVGSVGElement>();
  const ticks = ticksWithin(ORIGIN_Y, height);
  return (
    <RulerSide ref={ref}>
      {ticks.map(({ i, at }) => <path key={i} d={`M${17 - tickLength(i)} ${at}H17`} stroke="#4c4030" />)}
      {ticks.filter(({ i, at }) => i % 10 === 0 && at < height - 8).map(({ i, at }) => (
        <text key={i} transform={`translate(8 ${at}) rotate(-90)`} textAnchor="middle" fontSize="8" fill="#3c3024">
          {(0.3 - i / 100).toFixed(1)}
        </text>
      ))}
      <path d="M0 285.500h17" stroke="#e79a6c" />
    </RulerSide>
  );
};

const Drawing = () => (
  <Canvas>
    <defs>
      <filter id="glow" x="-20%" y="-20%" width="140%" height="140%"><feGaussianBlur stdDeviation="1.500" /></filter>
      <filter id="soft" x="-60%" y="-60%" width="220%" height="220%"><feGaussianBlur stdDeviation="1.500" /></filter>
    </defs>
    <rect x="232.500" y="75.500" width="176" height="176" fill="none" stroke="#ffec80" strokeWidth="6" filter="url(#glow)" />
    <rect x="232.500" y="75.500" width="176" height="176" fill="none" stroke="#ffe14a" strokeWidth="3" />
    {[232.500, 408.500].map((x) => (
      <g key={x}>
        <rect x={x - 8} y="155" width="16" height="16" fill="#ffe14a" opacity=".8" filter="url(#soft)" />
        <rect x={x - 4} y="159" width="8" height="8" fill="#fdc800" filter="url(#soft)" />
      </g>
    ))}
    <circle cx="321" cy="163" r="87.500" fill="none" stroke="#222" strokeWidth="1.100" />
    <g transform="translate(233 147) scale(.77)"><Boiler /></g>
    <g transform="translate(408 147) scale(.77)"><Radiator /></g>
    <g transform="translate(386 163)" fill="none">
      <path d="M2.500 3A3.700 3.700 0 1 1 3.500-1" stroke="#1f3a52" strokeWidth="3" /><path d="M2.500 3A3.700 3.700 0 1 1 3.500-1" stroke="#6db8ec" strokeWidth="1.500" />
      <path d="M.8 0H5L3.500 2.500z" fill="#6db8ec" stroke="#1f3a52" strokeWidth=".7" />
    </g>
    <g transform="translate(496 163)" fill="#6db8ec" stroke="#1f3a52" strokeWidth=".9">
      <path d="M-5-2.500-2-5v1.500h4v2.500h-4V.5zM5 2.500 2 5V3.500h-4V1h4V-.5z" />
    </g>
  </Canvas>
);

/* ---------- property rows ---------- */

type Prop = {
  id: string; label: string; value?: string; unit?: string; menu?: boolean; auto?: boolean; tone?: Tone;
};

const PropRow = ({ id, label, value = "", unit, menu, auto, tone = "plain" }: Prop) => (
  <Row $tone={tone === "focus" ? "focus" : undefined}>
    <span />
    <label htmlFor={id}>{label}</label>
    <Field $tone={tone}>
      {tone === "focus" ? (
        <PreviewField>
          <Preview>
            <Glyph width="9" height="6" viewBox="0 0 9 6"><path d="M0 1h4M5 1h4" stroke="#e33" /><path d="M0 4.500h4M5 4.500h4" stroke="#34f" /></Glyph>
          </Preview>
          <HiddenSelect id={id} defaultValue="0"><option value="0"></option></HiddenSelect>
        </PreviewField>
      ) : menu ? (
        <DropDown id={id} defaultValue={value}><option>{value}</option></DropDown>
      ) : (
        <TextBox id={id} defaultValue={value} readOnly={tone === "locked"} />
      )}
      <SideSlot $unit={!!unit}>{unit || <Chevron size={7} />}</SideSlot>
      <AutoSlot>{auto && <Monitor />}</AutoSlot>
    </Field>
  </Row>
);

const Section = ({ title }: { title: string }) => (
  <SectionHead><Chevron />{title}</SectionHead>
);

const layers: { name: string; off?: boolean; active?: boolean }[] = [
  { name: "底图" }, { name: "建筑" }, { name: "对流", active: true }, { name: "地面/墙面辐射" },
  { name: "绘制盘管 - 地面", off: true }, { name: "天花板辐射" }, { name: "绘制盘管 - 天花板", off: true },
  { name: "干式系统", off: true }, { name: "打印" },
];

const editTools: (string | null)[] = [
  "copy", "paste", "undo", "mirror", "node", "v", "up", "v", "table", null,
  "cut", "x", "redo", "swap", "connect", "v", "circle", "v", "frame", "v",
];

export default function App() {
  return (
    <>
      <GlobalStyle />
      <Window>
        <TitleBar>
          <QuickAccess>
            <Drop size={10} />
            <PlainButton aria-label="保存"><Save /></PlainButton>
            <PlainButton aria-label="打开"><OpenFolder /></PlainButton>
          </QuickAccess>
          <Title>新建项目* - InstalSystem 5 Editor CN (修改 24.1)</Title>
          <TitleRight>
            <Brand><Drop size={12} />INSTALSYSTEM</Brand>
            <PlainButton $w={28} $h={14} aria-label="最小化"><Glyph width="7" height="7"><path d="M0 3.500h7" stroke="#555" /></Glyph></PlainButton>
            <PlainButton $w={28} $h={14} aria-label="最大化"><Glyph width="7" height="7"><path d="M.5.5h6v6h-6z" stroke="#555" fill="none" /></Glyph></PlainButton>
            <PlainButton $w={28} $h={14} aria-label="关闭"><Cross /></PlainButton>
          </TitleRight>
        </TitleBar>

        <MenuRow>
          <MenuTab>文件</MenuTab>
          <MenuTab $active>主工具</MenuTab>
          <MenuTab>风机盘管</MenuTab>
          <MenuTab>HOFFER设备</MenuTab>
          <MenuTools>
            <ToolButton>窗口<Chevron /></ToolButton>
            <ToolButton>更改屏幕的窗口布置<Chevron /></ToolButton>
            <ToolButton aria-label="布局"><Mini name="layout" /></ToolButton>
            <ToolButton aria-label="目录"><Mini name="books" /></ToolButton>
            <ToolButton aria-label="信息"><Mini name="drops" /></ToolButton>
            <ToolButton aria-label="收起"><Chevron up color="#1c83d2" size={7} /></ToolButton>
          </MenuTools>
        </MenuRow>

        <Ribbon>
          <Group $w={104}>
            <GroupBody>
              <CalcButton aria-label="计算"><Big name="calc" /><Chevron /></CalcButton>
              <IconGrid $cols="repeat(5, 14px)" $row={21}>
                <Mini name="heat" label="采暖" /><Mini name="house" label="房间" /><Mini name="season" label="季节" />
                <Mini name="drop" label="给水" /><Mini name="drop" label="排水" />
                <Mini name="pipes" label="管道" /><Mini name="notes" label="结果" />
              </IconGrid>
            </GroupBody>
            <GroupCaption>计算</GroupCaption>
          </Group>
          <Group $w={136}>
            <GroupBody>
              <IconGrid $cols="14px 14px 14px 14px 14px 10px 14px 9px 14px 10px" $row={15}>
                {editTools.map((t, i) =>
                  t === null ? <span key={i} /> : t === "v" ? <Chevron key={i} /> : t === "x" ? (
                    <PlainButton key={i} aria-label="删除"><RedX size={11} /></PlainButton>
                  ) : <Mini key={i} name={t} label={t} />
                )}
              </IconGrid>
            </GroupBody>
            <GroupCaption>编辑</GroupCaption>
          </Group>
          <Group $w={30}>
            <GroupBody><BigButton icon="view" label="视图" w={28} menu /></GroupBody>
            <GroupCaption />
          </Group>
          <Group $w={106}>
            <GroupBody>
              <BigButton icon="label" label="标签" w={26} menu />
              <BigButton icon="dim" label="水平尺寸线" w={42} menu />
              <IconGrid $cols="14px 14px" $row={15}>
                <AbcGlyph>Abc</AbcGlyph><Chevron />
                <Mini name="grid" s={9} label="表格" /><Mini name="note" s={9} label="便签" />
              </IconGrid>
            </GroupBody>
            <GroupCaption>标签和图形</GroupCaption>
          </Group>
          <Group $w={61}>
            <GroupBody>
              <BigButton icon="pin" label="控制" w={26} menu />
              <BigButton icon="create" label="创建" w={26} />
            </GroupBody>
            <GroupCaption>示意图</GroupCaption>
          </Group>
          <Group $w={303}>
            <GroupBody>
              <BigButton icon="supply" label="供 回" w={25} menu />
              <BigButton icon="boiler" label="源" w={27} />
              <BigButton icon="station" label="户用换热机组" w={50} />
              <BigButton icon="riser" label="立管" w={26} menu />
              <BigButton icon="reducer" label="折减点" w={28} />
              <BigButton icon="mixer" label="混水装置" w={36} menu />
              <BigButton icon="manifold" label="分集水器" w={36} menu />
              <BigButton icon="valve" label="阀门" w={26} menu />
              <BigButton icon="fitting" label="配件" w={24} menu />
              <IconGrid $cols="16px" $row={15}>
                <Mini name="mini" s={10} label="分配器" /><Mini name="mix2" s={10} label="混合器" />
              </IconGrid>
            </GroupBody>
            <GroupCaption>水力分配 - 热力装置</GroupCaption>
          </Group>
          <Group $w={110}>
            <GroupBody>
              <BigButton icon="unit" label="末端装置" w={36} />
              <BigButton icon="radValve" label="散热器阀" w={36} menu />
              <BigButton icon="radiator" label="散热器" w={28} menu />
            </GroupBody>
            <GroupCaption>对流</GroupCaption>
          </Group>
          <RibbonEnd><Chevron up size={7} /></RibbonEnd>
        </Ribbon>

        <Work>
          <Dock>
            <DockTab>
              <Mini name="find" s={10} />
              <DockLabel>寻找</DockLabel>
              <Pin side /><Cross size={6} color="#333" />
            </DockTab>
            <DockTab>
              <Mini name="list" s={10} />
              <DockLabel>项目浏览器</DockLabel>
              <Pin side /><Cross size={6} color="#333" />
            </DockTab>
          </Dock>

          <Editor>
            <DocTabs>
              <DocTab $active>
                <Mini name="pencil" s={10} />2D编辑器
                <PlainButton $w={13} aria-label="关闭"><Cross size={6} /></PlainButton>
              </DocTab>
              <DocTab><Mini name="hand" s={10} />一般参数</DocTab>
              <DocTabsMore><PlainButton $w={11} aria-label="更多"><Chevron color="#888" /></PlainButton></DocTabsMore>
            </DocTabs>
            <Sheet>
              <Corner>
                <Glyph width="13" height="14" viewBox="0 0 13 14">
                  <path d="M2 2.500h9" stroke="#222" strokeDasharray="1.500 1" strokeWidth="1.500" /><path d="M2 2v5M.5 5 2 7l1.500-2" stroke="#222" fill="none" />
                  <text x="8" y="12" fontSize="6" textAnchor="middle" fill="#444">3</text>
                </Glyph>
              </Corner>
              <HorizontalRuler />
              <VerticalRuler />
              <Drawing />
            </Sheet>
            <LayerBar>
              <LevelButton aria-label="上一层"><Glyph width="7" height="9" viewBox="0 0 7 9"><path d="M3.500.5 6.500 4H5v4.500H2V4H.5z" fill="#4a9cec" stroke="#1b5aa0" strokeWidth=".8" /></Glyph></LevelButton>
              <LevelButton aria-label="下一层"><Glyph width="7" height="9" viewBox="0 0 7 9"><path d="M3.500 8.500 6 5.500H4.500v-5h-2v5H1z" fill="#eee" stroke="#999" strokeWidth=".8" /></Glyph></LevelButton>
              <LevelPicker>
                <Mini name="plan" s={10} />
                <DropDown aria-label="楼层" defaultValue="B1 层"><option>B1 层</option></DropDown>
                <Chevron />
              </LevelPicker>
              <Layers>
                {layers.map((l) => (
                  <LayerTab key={l.name} $active={l.active}>
                    {l.off ? <RedX /> : <Bulb />}{l.name}
                    {l.active && <LayerMark />}
                  </LayerTab>
                ))}
              </Layers>
              <LayerTools><Chevron /><Mini name="screen" s={10} /></LayerTools>
            </LayerBar>
            <StatusBar>
              <Glyph width="11" height="10" viewBox="0 0 11 10"><path d="M5.500.5 10.500 9.500H.5z" fill="#ffd33d" stroke="#e9a91a" /><path d="M5.500 3.500v3M5.500 7.500v1" stroke="#333" strokeWidth="1.200" /></Glyph>
              <StatusCoords>0.615; 0.041</StatusCoords>
              <StatusModes>
                <Mode $on>定向线</Mode><Mode>上锁</Mode><Mode>栅格</Mode><Mode $on>自动</Mode><Mode>重复</Mode>
              </StatusModes>
              <Chevron color="#fff" />
            </StatusBar>
          </Editor>

          <Panel>
            <PanelHeader>
              <Mini name="form" s={10} /><Dot /><span>参数表</span><Grip />
              <PlainButton $w={7} aria-label="菜单"><Chevron color="#fff" /></PlainButton>
              <PlainButton $w={7} aria-label="固定"><Pin color="#fff" /></PlainButton>
              <PlainButton $w={7} aria-label="关闭"><Cross size={6} color="#fff" /></PlainButton>
            </PanelHeader>
            <Caption><PlainButton aria-label="展开"><Chevron size={7} /></PlainButton><span>1* 缓冲罐</span></Caption>
            <PropArea>
              <PropList>
                <Section title="部件符号" />
                <PropRow id="symbol" label="符号" menu />
                <PropRow id="room" label="所在房间" value="无" menu auto tone="auto" />
                <Section title="位置" />
                <PropRow id="elev" label="标高" value="-2.60" unit="m" tone="locked" />
                <Marked>
                  <PropRow id="dist" label="与地面的距离（在楼层参数中设置）" value="0.15" unit="m" auto tone="auto" />
                  <PropRow id="dir" label="方向" tone="focus" />
                </Marked>
                <Section title="技术参数" />
                <Marked>
                  <PropRow id="type" label="类型" value="kv值 = 10.000 m³/h" menu />
                  <PropRow id="vol" label="V" value="50.0" unit="dm³" />
                </Marked>
                <PropRow id="state" label="部件状态" value="计划的" menu />
                <Marked><PropRow id="conn" label="接口尺寸" menu /></Marked>
                <Section title="尺寸" />
                <PropRow id="height" label="高度" value="0.50" unit="m" />
                <PropRow id="dia" label="直径" value="0.20" unit="m" />
                <Section title="2D/3D视图样式" />
                <PropRow id="style" label="部件样式" menu auto tone="auto" />
              </PropList>
              <ScrollTrack><Chevron up color="#888" size={7} /><Chevron color="#888" size={7} /></ScrollTrack>
            </PropArea>
            <Help>方向</Help>
          </Panel>
        </Work>
      </Window>
    </>
  );
}
